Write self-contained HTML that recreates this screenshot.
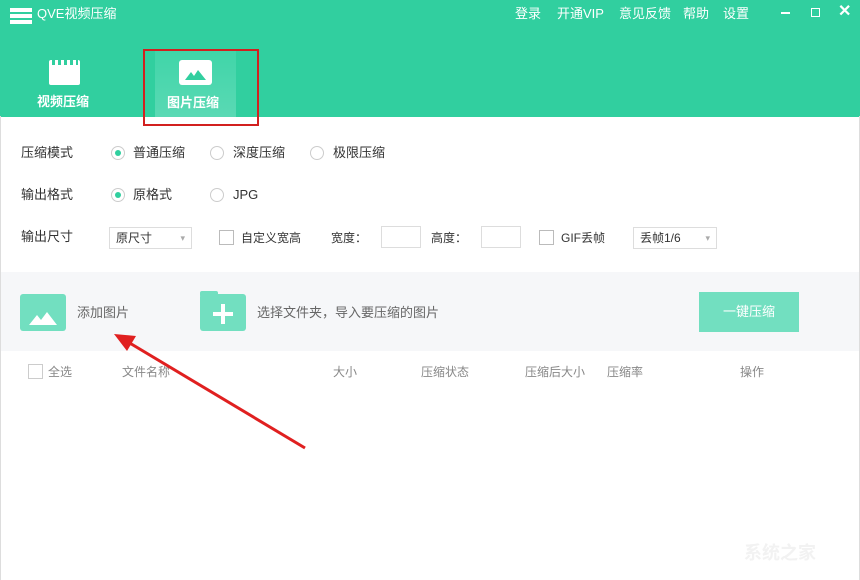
<!DOCTYPE html>
<html><head><meta charset="utf-8"><style>
*{margin:0;padding:0;box-sizing:border-box}
body{width:860px;height:580px;overflow:hidden;background:#fff;font-family:"Liberation Sans","Noto Sans CJK SC",sans-serif;position:relative;color:#333;font-size:13px}
.a{position:absolute;white-space:nowrap;line-height:16px}
.top{position:absolute;left:0;top:0;width:860px;height:117px;background:#31cf9f}
.radio{position:absolute;width:14px;height:14px;border:1px solid #ccc;border-radius:50%;background:#fff}
.radio.on::after{content:"";position:absolute;left:3px;top:3px;width:6px;height:6px;border-radius:50%;background:#31cf9f}
.chk{position:absolute;width:15px;height:15px;border:1px solid #bbb;background:#fff}
.sel{position:absolute;height:22px;border:1px solid #ddd;background:#fff;font-size:12px;padding:2px 6px;color:#333;line-height:16px}
.sel::after{content:"▾";position:absolute;right:6px;top:2px;color:#aaa;font-size:9px}
.inp{position:absolute;width:40px;height:22px;border:1px solid #ddd}
.g{color:#666}
.h{color:#888;font-size:12px}
</style></head><body>
<div class="top"></div>
<div class="a" style="left:10px;top:8px;width:22px;height:4px;background:#fff"></div>
<div class="a" style="left:10px;top:14px;width:22px;height:4px;background:#fff"></div>
<div class="a" style="left:10px;top:20px;width:22px;height:4px;background:#fff"></div>
<div class="a" style="left:37px;top:6px;color:#fff;font-size:13px">QVE视频压缩</div>
<div class="a" style="left:515px;top:6px;color:#fff;font-size:13px">登录</div>
<div class="a" style="left:557px;top:6px;color:#fff;font-size:13px">开通VIP</div>
<div class="a" style="left:619px;top:6px;color:#fff;font-size:13px">意见反馈</div>
<div class="a" style="left:683px;top:6px;color:#fff;font-size:13px">帮助</div>
<div class="a" style="left:723px;top:6px;color:#fff;font-size:13px">设置</div>
<div class="a" style="left:781px;top:12px;width:9px;height:2px;background:#fff"></div>
<div class="a" style="left:811px;top:8px;width:9px;height:9px;border:1.5px solid #fff"></div>
<div class="a" style="left:838px;top:4px;color:#fff;font-size:16px;font-weight:bold">✕</div>
<div class="a" style="left:49px;top:60px;width:31px;height:25px;background:#fff;border-radius:2px"></div>
<div class="a" style="left:52px;top:60px;width:26px;height:5px;background:repeating-linear-gradient(90deg,#31cf9f 0 3px,transparent 3px 6px)"></div>
<div class="a" style="left:37px;top:94px;color:#fff;font-size:13px;font-weight:bold">视频压缩</div>
<div class="a" style="left:155px;top:49px;width:81px;height:68px;background:linear-gradient(#3fd5a8,#5ad9b4)"></div>
<div class="a" style="left:179px;top:60px;width:33px;height:25px;background:#fff;border-radius:3px"></div>
<svg class="a" style="left:185px;top:68px" width="21" height="12"><path d="M0 12 L6 4 L9 8 L13 2 L21 12Z" fill="#31cf9f"/></svg>
<div class="a" style="left:167px;top:95px;color:#fff;font-size:13px;font-weight:bold">图片压缩</div>
<div class="a" style="left:143px;top:49px;width:116px;height:77px;border:2px solid #d2201f"></div>
<div class="a" style="left:21px;top:145px">压缩模式</div>
<div class="radio on" style="left:111px;top:146px"></div><div class="a" style="left:133px;top:145px">普通压缩</div>
<div class="radio" style="left:210px;top:146px"></div><div class="a" style="left:233px;top:145px">深度压缩</div>
<div class="radio" style="left:310px;top:146px"></div><div class="a" style="left:333px;top:145px">极限压缩</div>
<div class="a" style="left:21px;top:187px">输出格式</div>
<div class="radio on" style="left:111px;top:188px"></div><div class="a" style="left:133px;top:187px">原格式</div>
<div class="radio" style="left:210px;top:188px"></div><div class="a" style="left:233px;top:187px">JPG</div>
<div class="a" style="left:21px;top:229px">输出尺寸</div>
<div class="sel" style="left:109px;top:227px;width:83px">原尺寸</div>
<div class="chk" style="left:219px;top:230px"></div><div class="a" style="left:241px;top:230px;font-size:12px">自定义宽高</div>
<div class="a" style="left:331px;top:230px;font-size:12px">宽度：</div>
<div class="inp" style="left:381px;top:226px"></div>
<div class="a" style="left:431px;top:230px;font-size:12px">高度：</div>
<div class="inp" style="left:481px;top:226px"></div>
<div class="chk" style="left:539px;top:230px"></div><div class="a" style="left:561px;top:230px;font-size:12px">GIF丢帧</div>
<div class="sel" style="left:633px;top:227px;width:84px">丢帧1/6</div>
<div class="a" style="left:0;top:272px;width:860px;height:79px;background:#f6f7f9"></div>
<div class="a" style="left:20px;top:294px;width:46px;height:37px;background:#72dfc0;border-radius:3px"></div>
<svg class="a" style="left:29px;top:311px" width="28" height="14"><path d="M0 14 L8 4 L12 9 L18 1 L28 14Z" fill="#fff"/></svg>
<div class="a g" style="left:77px;top:305px">添加图片</div>
<div class="a" style="left:200px;top:294px;width:46px;height:37px;background:#72dfc0;border-radius:3px"></div>
<div class="a" style="left:200px;top:291px;width:18px;height:6px;background:#72dfc0;border-radius:2px"></div>
<div class="a" style="left:221px;top:304px;width:4px;height:20px;background:#fff"></div>
<div class="a" style="left:213px;top:312px;width:20px;height:4px;background:#fff"></div>
<div class="a g" style="left:257px;top:305px">选择文件夹，导入要压缩的图片</div>
<div class="a" style="left:699px;top:292px;width:100px;height:40px;background:#72dfc0;color:#fff;text-align:center;line-height:40px">一键压缩</div>
<div class="chk" style="left:28px;top:364px;border-color:#ccc"></div>
<div class="a h" style="left:48px;top:364px">全选</div>
<div class="a h" style="left:122px;top:364px">文件名称</div>
<div class="a h" style="left:333px;top:364px">大小</div>
<div class="a h" style="left:421px;top:364px">压缩状态</div>
<div class="a h" style="left:525px;top:364px">压缩后大小</div>
<div class="a h" style="left:607px;top:364px">压缩率</div>
<div class="a h" style="left:740px;top:364px">操作</div>
<svg class="a" style="left:0;top:0" width="860" height="580"><line x1="305" y1="448" x2="128" y2="342" stroke="#e02020" stroke-width="3"/><path d="M114 334 L136 336 L127 351Z" fill="#e02020"/></svg>
<div class="a" style="left:0;top:116px;width:1px;height:464px;background:#ddd"></div>
<div class="a" style="left:859px;top:116px;width:1px;height:464px;background:#ddd"></div>
<div class="a" style="left:744px;top:543px;color:#f2f2f2;font-size:18px;font-weight:bold;line-height:20px">系统之家</div>
</body></html>
